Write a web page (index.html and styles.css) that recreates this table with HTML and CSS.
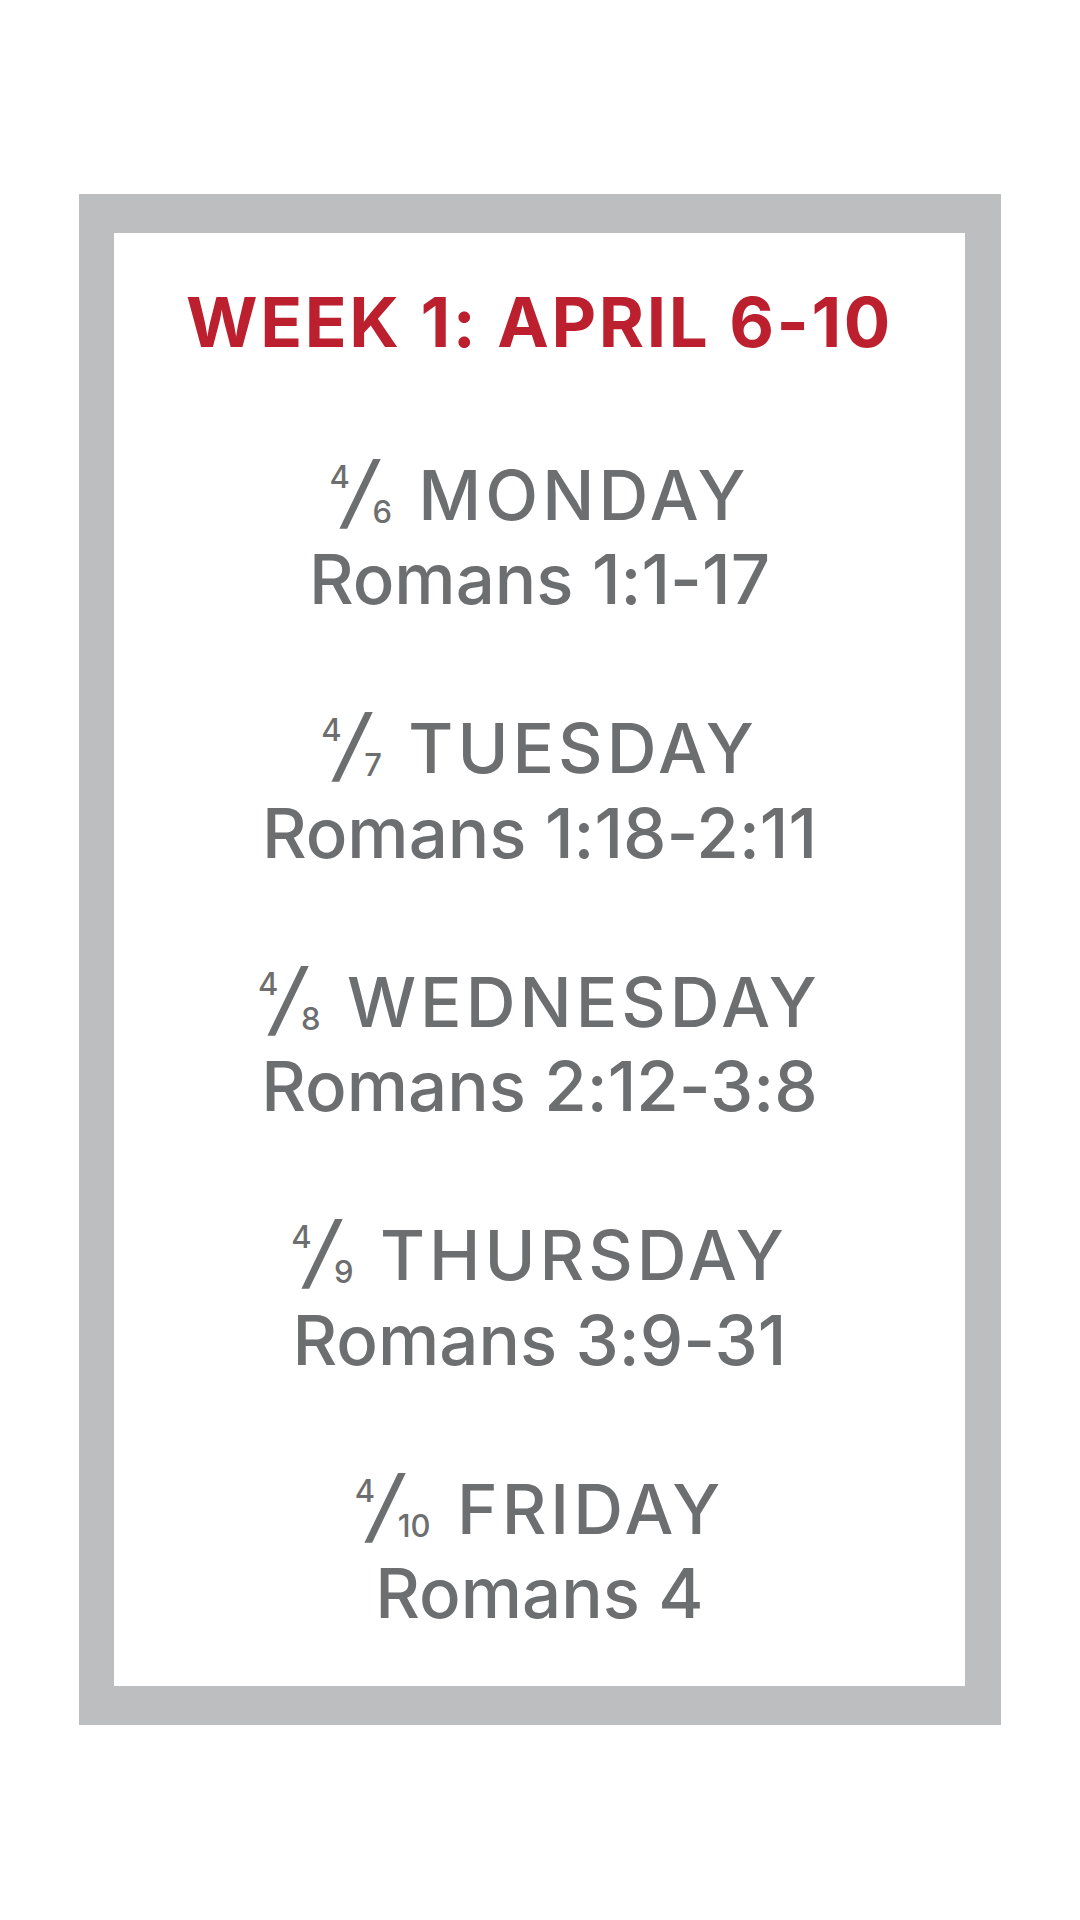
FILE: index.html
```html
<!DOCTYPE html>
<html lang="en">
<head>
<meta charset="utf-8">
<title>Week 1: April 6-10</title>
<link rel="stylesheet" href="styles.css">
</head>
<body>
  <main class="frame">
    <h1 class="title">WEEK 1: APRIL 6-10</h1>
    <section class="day">
      <div class="day-name"><span class="frac"><span class="num">4</span><span class="sl">/</span><span class="den">6</span></span> MONDAY</div>
      <div class="reading">Romans 1:1-17</div>
    </section>
    <section class="day">
      <div class="day-name"><span class="frac"><span class="num">4</span><span class="sl">/</span><span class="den">7</span></span> TUESDAY</div>
      <div class="reading">Romans 1:18-2:11</div>
    </section>
    <section class="day">
      <div class="day-name"><span class="frac"><span class="num">4</span><span class="sl">/</span><span class="den">8</span></span> WEDNESDAY</div>
      <div class="reading">Romans 2:12-3:8</div>
    </section>
    <section class="day">
      <div class="day-name"><span class="frac"><span class="num">4</span><span class="sl">/</span><span class="den">9</span></span> THURSDAY</div>
      <div class="reading">Romans 3:9-31</div>
    </section>
    <section class="day">
      <div class="day-name"><span class="frac"><span class="num">4</span><span class="sl">/</span><span class="den">10</span></span> FRIDAY</div>
      <div class="reading">Romans 4</div>
    </section>
  </main>
</body>
</html>
```
FILE: styles.css
```css
html, body {
  margin: 0;
  padding: 0;
  background: #ffffff;
}
body {
  width: 1080px;
  height: 1920px;
  font-family: Inter, "Noto Sans", sans-serif;
  font-feature-settings: "calt" 0;
}
.frame {
  box-sizing: border-box;
  margin: 194px 0 0 79px;
  width: 922px;
  height: 1531px;
  border-style: solid;
  border-color: #bcbec0;
  border-width: 39px 36px 39px 35px;
  background: #ffffff;
  padding-top: 47px;
  text-align: center;
}
.title {
  margin: 0 0 88px;
  font-size: 69px;
  line-height: 84.5px;
  font-weight: 700;
  letter-spacing: 2.6px;
  color: #bc202e;
}
.day {
  margin: 0 0 84.5px;
  font-size: 69px;
  line-height: 84.5px;
  font-weight: 500;
  color: #6d6e70;
}
.day-name {
  letter-spacing: 4px;
}
.frac {
  margin-right: 4px;
  letter-spacing: 0;
}
.num, .den, .sl {
  line-height: 0;
}
.num {
  font-size: 31px;
  vertical-align: 32px;
}
.sl {
  display: inline-block;
  font-size: 80px;
  font-weight: 500;
  transform: skewX(-12deg);
  margin: 0 -3px 0 -4px;
}
.den {
  font-size: 31px;
  vertical-align: -3px;
}
```
